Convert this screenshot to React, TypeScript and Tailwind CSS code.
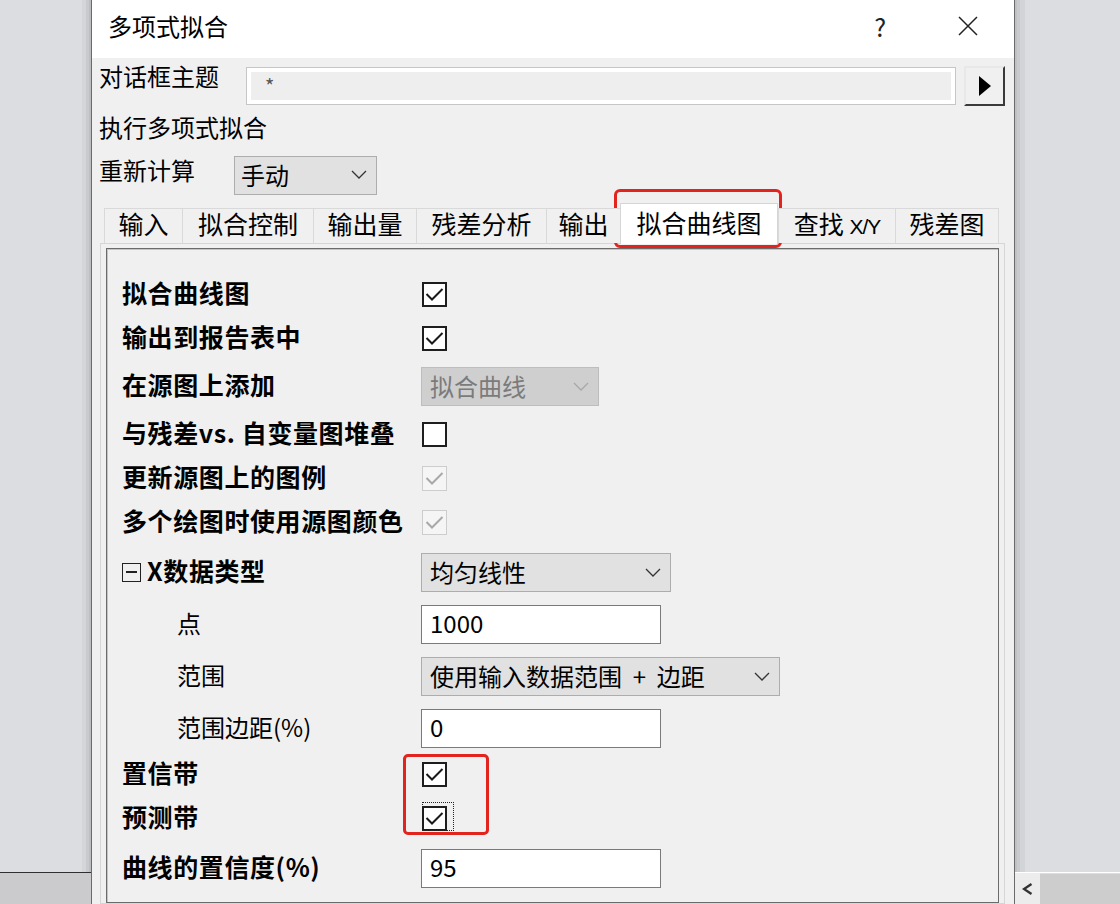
import React from 'react';

function Chevron({ color = '#333333' }: { color?: string }) {
  return (
    <svg width="16" height="9" viewBox="0 0 16 9">
      <path d="M1 1 L8 8 L15 1" fill="none" stroke={color} strokeWidth="1.3" />
    </svg>
  );
}

function Check({ checked, disabled, focus }: { checked?: boolean; disabled?: boolean; focus?: boolean }) {
  return (
    <span className="relative ml-[1px] flex h-[25px] w-[25px]">
      <span
        className={
          disabled
            ? 'flex h-[25px] w-[25px] items-center justify-center border-[1.5px] border-[#cdcdcd] bg-[#f5f5f5]'
            : 'flex h-[25px] w-[25px] items-center justify-center border-2 border-[#1e1e1e] bg-white'
        }
      >
        {checked && (
          <svg width="19" height="15" viewBox="0 0 19 15">
            <path d="M1.5 7 L7 12.5 L17.5 2" fill="none" stroke={disabled ? '#a8a8a8' : '#1a1a1a'} strokeWidth="2" />
          </svg>
        )}
      </span>
      {focus && <span className="absolute -top-[4px] -right-[7px] bottom-0 left-0 border border-dotted border-[#222]" />}
    </span>
  );
}

function Select({ text, width, disabled }: { text: string; width: string; disabled?: boolean }) {
  return (
    <div
      className={
        disabled
          ? `flex h-[39px] ${width} items-center justify-between border border-[#bdbdbd] bg-[#cfcfcf] pl-[8px] pr-[9px] text-[24px] leading-none text-[#7b7b7b]`
          : `flex h-[39px] ${width} items-center justify-between border border-[#adadad] bg-[#e1e1e1] pl-[8px] pr-[9px] text-[24px] leading-none`
      }
    >
      <span className="whitespace-pre">{text}</span>
      <Chevron color={disabled ? '#a8a8a8' : '#333333'} />
    </div>
  );
}

function Input({ text }: { text: string }) {
  return (
    <div className="flex h-[39px] w-[240px] items-center border border-[#7a7a7a] bg-white pb-[2px] pl-[8px] text-[24px] leading-none">
      {text}
    </div>
  );
}

function Row({ h, label, bold = true, children }: { h: string; label: React.ReactNode; bold?: boolean; children?: React.ReactNode }) {
  return (
    <div className={`flex ${h} items-center`}>
      <div
        className={
          bold
            ? 'w-[299px] shrink-0 whitespace-nowrap pb-[3px] text-[25px] font-bold leading-none tracking-[0.6px]'
            : 'w-[299px] shrink-0 whitespace-nowrap pb-[3px] pl-[55px] text-[24px] leading-none'
        }
      >
        {label}
      </div>
      {children}
    </div>
  );
}

const tabs: { t: string; w: string; sel?: boolean }[] = [
  { t: '输入', w: 'w-[78px]' },
  { t: '拟合控制', w: 'w-[131px]' },
  { t: '输出量', w: 'w-[103px]' },
  { t: '残差分析', w: 'w-[130px]' },
  { t: '输出', w: 'w-[74px]' },
  { t: '拟合曲线图', w: 'w-[158px]', sel: true },
  { t: '查找 X/Y', w: 'w-[117px]' },
  { t: '残差图', w: 'w-[104px]' },
];

export default function App() {
  return (
    <div className="relative flex h-[904px] w-[1120px] overflow-hidden bg-[#dcdde1] text-black [font-family:'Noto_Sans_CJK_SC','Noto_Sans',sans-serif]">
      {/* left backdrop */}
      <div className="flex w-[91px] shrink-0 flex-col">
        <div className="flex flex-1">
          <div className="flex-1 bg-[#dcdde1]" />
          <div className="w-[4px] bg-[#d4d5d8]" />
          <div className="w-[3px] bg-[#c9cacd]" />
          <div className="w-[2px] bg-[#bdbec1]" />
        </div>
        <div className="h-px bg-[#2f2f2f]" />
        <div className="h-[31px] bg-[#cbcbcd]" />
      </div>

      {/* dialog */}
      <div className="flex w-[924px] shrink-0 flex-col border-x border-[#6a6a6a] bg-[#f0f0f0]">
        {/* title bar */}
        <div className="flex h-[58px] items-center bg-white pb-[6px] pl-[16px] pr-[36px]">
          <span className="text-[24px] leading-none">多项式拟合</span>
          <span className="ml-auto text-[25px] leading-none text-[#222]">?</span>
          <svg className="ml-[72px]" width="20" height="20" viewBox="0 0 20 20">
            <path d="M1 1 L19 19 M19 1 L1 19" stroke="#222" strokeWidth="1.5" />
          </svg>
        </div>

        {/* header controls */}
        <div className="pl-[7px]">
          <div className="mt-[8px] flex items-start">
            <div className="-mt-[2px] w-[147px] text-[24px] leading-[24px]">对话框主题</div>
            <div className="mt-[1px] h-[38px] w-[710px] border border-[#c6c6c6] bg-white p-[4px]">
              <div className="flex h-full items-center bg-[#eeeeee] pl-[14px] text-[20px] text-[#555]">*</div>
            </div>
            <div className="ml-[8px] flex h-[40px] w-[41px] items-center justify-center border-2 border-b-[#3a3a3a] border-l-[#e8e8e8] border-r-[#3a3a3a] border-t-[#e8e8e8] bg-[#f0f0f0]">
              <svg width="12" height="20" viewBox="0 0 12 20">
                <path d="M0 0 L12 10 L0 20 Z" fill="#000" />
              </svg>
            </div>
          </div>
          <div className="mt-[9px] text-[24px] leading-[24px]">执行多项式拟合</div>
          <div className="mt-[17px] flex items-start">
            <div className="mt-[2px] w-[135px] text-[24px] leading-[24px]">重新计算</div>
            <div className="flex h-[39px] w-[143px] items-center justify-between border border-[#adadad] bg-[#e1e1e1] pb-[2px] pl-[6px] pr-[9px] text-[24px] leading-none">
              <span>手动</span>
              <Chevron />
            </div>
          </div>
        </div>

        {/* tabs */}
        <div className="relative z-10 ml-[8px] mt-[8px] flex h-[40px] items-end pl-[4px]">
          {tabs.map((tb, i) =>
            tb.sel ? (
              <div
                key={i}
                className={`-mb-px flex h-[41px] ${tb.w} items-start justify-center border-x border-t border-[#d6d6d6] bg-white pt-[6px] text-[25px] leading-none`}
              >
                {tb.t}
              </div>
            ) : (
              <div
                key={i}
                className={
                  i === tabs.length - 1
                    ? `flex h-[35px] ${tb.w} items-center justify-center border-x border-t border-[#d9d9d9] bg-[#f0f0f0] pb-[5px] text-[25px] leading-none`
                    : `flex h-[35px] ${tb.w} items-center justify-center border-l border-t border-[#d9d9d9] bg-[#f0f0f0] pb-[5px] text-[25px] leading-none`
                }
              >
                {tb.t === '查找 X/Y' ? (
                  <span>
                    查找 <span className="text-[21px] tracking-[-1px] [font-family:'Liberation_Sans_Narrow','Liberation_Sans',sans-serif]">X/Y</span>
                  </span>
                ) : (
                  tb.t
                )}
              </div>
            )
          )}
        </div>

        {/* tab page */}
        <div className="ml-[8px] flex w-[905px] flex-1 flex-col border border-[#d6d6d6] bg-[#f0f0f0] px-[5px] pt-[4px]">
          <div className="flex-1 border border-[#6b6b6b] pl-[15px] pt-[23px] shadow-[inset_1px_1px_0_#c4c4c4]">
            <Row h="h-[44px]" label="拟合曲线图">
              <Check checked />
            </Row>
            <Row h="h-[44px]" label="输出到报告表中">
              <Check checked />
            </Row>
            <Row h="h-[52px]" label="在源图上添加">
              <Select text="拟合曲线" width="w-[178px]" disabled />
            </Row>
            <Row h="h-[44px]" label="与残差vs. 自变量图堆叠">
              <Check />
            </Row>
            <Row h="h-[44px]" label="更新源图上的图例">
              <Check checked disabled />
            </Row>
            <Row h="h-[44px]" label="多个绘图时使用源图颜色">
              <Check checked disabled />
            </Row>
            <Row
              h="h-[56px]"
              label={
                <span className="flex items-center">
                  <span className="mr-[6px] mt-[3px] flex h-[19px] w-[19px] items-center justify-center border-[1.5px] border-[#222]">
                    <span className="h-[1.5px] w-[11px] bg-[#222]" />
                  </span>
                  <span>X数据类型</span>
                </span>
              }
            >
              <Select text="均匀线性" width="w-[250px]" />
            </Row>
            <Row h="h-[48px]" label="点" bold={false}>
              <Input text="1000" />
            </Row>
            <Row h="h-[56px]" label="范围" bold={false}>
              <Select text="使用输入数据范围  +  边距" width="w-[359px]" />
            </Row>
            <Row h="h-[48px]" label="范围边距(%)" bold={false}>
              <Input text="0" />
            </Row>
            <Row h="h-[44px]" label="置信带">
              <Check checked />
            </Row>
            <Row h="h-[44px]" label="预测带">
              <Check checked focus />
            </Row>
            <Row h="h-[56px]" label="曲线的置信度(%)">
              <Input text="95" />
            </Row>
          </div>
        </div>
      </div>

      {/* right backdrop */}
      <div className="flex flex-1 flex-col">
        <div className="flex flex-1">
          <div className="w-[2px] bg-[#c0c1c4]" />
          <div className="w-[3px] bg-[#c9cace]" />
          <div className="w-[5px] bg-[#d3d4d8]" />
          <div className="flex-1 bg-[#dcdde1]" />
        </div>
        <div className="h-px bg-white" />
        <div className="flex h-[31px]">
          <div className="flex w-[25px] items-center justify-center bg-[#ececec]">
            <svg width="11" height="12" viewBox="0 0 11 12">
              <path d="M9.5 1 L2 6 L9.5 11" fill="none" stroke="#333" strokeWidth="2.4" />
            </svg>
          </div>
          <div className="mt-[1px] flex-1 bg-[#cdcdcd]" />
        </div>
      </div>

      {/* red annotation boxes */}
      <div className="pointer-events-none absolute left-[614px] top-[189px] h-[59px] w-[168px] rounded-[6px] border-[3px] border-[#e3231e]" />
      <div className="pointer-events-none absolute left-[403px] top-[754px] h-[81px] w-[86px] rounded-[5px] border-[3px] border-[#e3231e]" />
    </div>
  );
}
